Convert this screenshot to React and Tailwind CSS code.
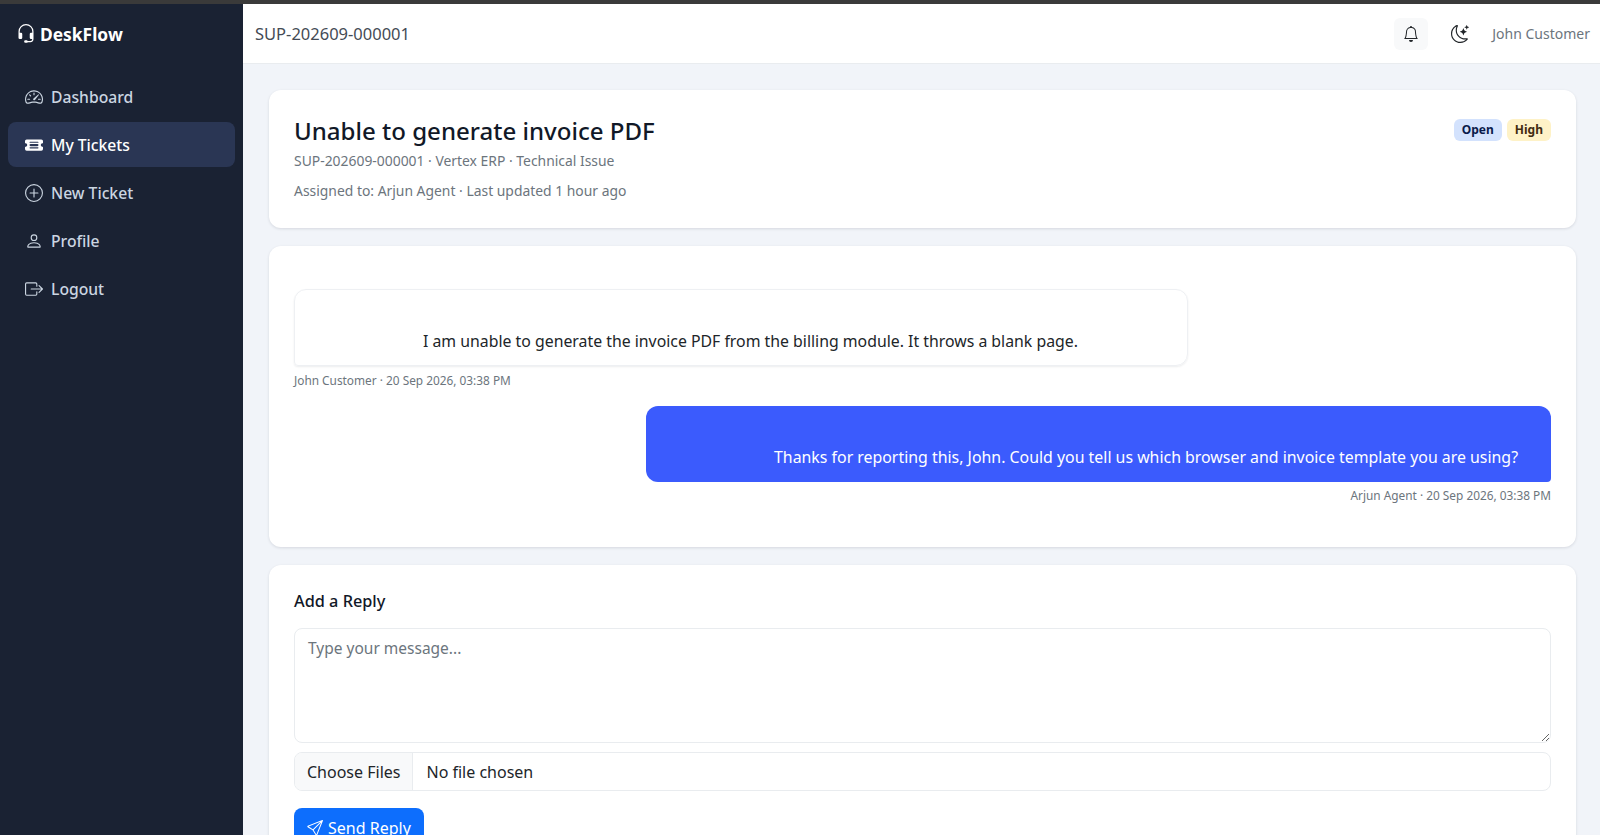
import React from "react";
import {
  BsHeadset,
  BsSpeedometer2,
  BsTicketDetailedFill,
  BsPlusCircle,
  BsPerson,
  BsBoxArrowRight,
  BsBell,
  BsMoonStars,
  BsSend,
} from "react-icons/bs";

const navItems = [
  { label: "Dashboard", icon: BsSpeedometer2 },
  { label: "My Tickets", icon: BsTicketDetailedFill, active: true },
  { label: "New Ticket", icon: BsPlusCircle },
  { label: "Profile", icon: BsPerson },
  { label: "Logout", icon: BsBoxArrowRight },
];

const Sidebar = () => (
  <aside className="w-[243px] shrink-0 bg-[#1a2233] text-[#cbd5e1]">
    <div className="flex h-[60px] items-center gap-[4px] pl-[16px] text-[17.4px] font-bold text-white">
      <BsHeadset className="text-[20px]" />
      DeskFlow
    </div>
    <nav className="mt-[10px] flex flex-col gap-[3px] px-2">
      {navItems.map((item) => (
        <a
          key={item.label}
          href="#"
          className={
            item.active
              ? "flex h-[45px] items-center gap-[8px] rounded-lg bg-[#2a3654] pl-[17px] text-[15.7px] font-medium text-white"
              : "flex h-[45px] items-center gap-[8px] rounded-lg pl-[17px] text-[15.7px] font-medium"
          }
        >
          <item.icon className="text-[18px]" />
          <span className="pt-[2px]">{item.label}</span>
        </a>
      ))}
    </nav>
  </aside>
);

const Header = () => (
  <header className="flex h-[60px] shrink-0 items-center justify-between border-b border-[#e9ecef] bg-white pl-[12px] pr-[10px]">
    <span className="pt-[2px] text-[16.5px] text-[#444b55]">SUP-202609-000001</span>
    <div className="flex items-center">
      <button className="flex h-[32px] w-[34px] items-center justify-center rounded-md bg-[#f8f9fa] text-[#212529]">
        <BsBell className="text-[16px]" />
      </button>
      <BsMoonStars className="ml-[23px] text-[18px] text-[#212529]" />
      <span className="ml-[23px] text-[14px] text-[#6c757d]">John Customer</span>
    </div>
  </header>
);

const Card = ({ className, children }) => (
  <section className={"rounded-xl bg-white px-[25px] shadow-[0_1px_3px_rgba(15,23,42,0.12)] " + className}>
    {children}
  </section>
);

const App = () => {
  return (
    <div className="h-[835px] w-[1600px] overflow-hidden bg-[#f1f4f9] font-['Noto_Sans',sans-serif] text-[#212529]">
      <div className="h-[4px] bg-[#3a3a3a]" />
      <div className="flex h-[831px]">
        <Sidebar />
        <div className="flex min-w-0 flex-1 flex-col">
          <Header />
          <main className="flex flex-col gap-[18px] pl-[26px] pr-[24px] pt-[26px]">
            <Card className="flex h-[138px] items-start justify-between pt-[25px]">
              <div>
                <h1 className="text-[24.05px] font-medium leading-[32px] text-[#111827]">Unable to generate invoice PDF</h1>
                <p className="mt-[2px] text-[13.9px] leading-[24px] text-[#6c757d]">
                  SUP-202609-000001 · Vertex ERP · Technical Issue
                </p>
                <p className="mt-[6px] text-[13.9px] leading-[24px] text-[#6c757d]">
                  Assigned to: Arjun Agent · Last updated 1 hour ago
                </p>
              </div>
              <div className="mt-[4px] flex gap-[5px] text-[12px] font-bold">
                <span className="rounded-md bg-[#d3e2fd] px-[8px] py-[2px] text-[#0a1a4a]">Open</span>
                <span className="rounded-md bg-[#fef2c7] px-[8px] py-[2px] text-[#422c10]">High</span>
              </div>
            </Card>

            <Card className="h-[301px] pt-[43px]">
              <div className="w-[894px] rounded-xl rounded-bl-sm border border-[#eef0f3] pb-[12px] pl-[128px] pt-[39px] text-[15.84px] leading-[24px] shadow-[0_1px_2px_rgba(15,23,42,0.08)]">
                I am unable to generate the invoice PDF from the billing module. It throws a blank page.
              </div>
              <p className="mt-[5px] text-[11.85px] leading-[18px] text-[#6c757d]">John Customer · 20 Sep 2026, 03:38 PM</p>
              <div className="ml-auto mt-[17px] w-[905px] rounded-xl rounded-br-sm bg-[#3b5bfd] pb-[13px] pl-[128px] pt-[39px] text-[15.88px] leading-[24px] text-white">
                Thanks for reporting this, John. Could you tell us which browser and invoice template you are using?
              </div>
              <p className="mt-[4px] text-right text-[11.85px] leading-[18px] text-[#6c757d]">Arjun Agent · 20 Sep 2026, 03:38 PM</p>
            </Card>

            <Card className="h-[300px] pt-[24px]">
              <h2 className="text-[16.3px] font-medium leading-[24px] text-[#111827]">Add a Reply</h2>
              <textarea
                placeholder="Type your message..."
                className="mt-[15px] block h-[115px] w-full rounded-lg border border-[#e9ecef] px-[13px] py-[7px] text-[15.5px] leading-[24px] placeholder:text-[#6c757d]"
              />
              <label className="mt-[9px] flex h-[39px] items-center overflow-hidden rounded-lg border border-[#e9ecef] text-[16px]">
                <input type="file" multiple className="hidden" />
                <span className="flex h-full items-center border-r border-[#e9ecef] bg-[#f8f9fa] px-[12px]">Choose Files</span>
                <span className="pl-[13px]">No file chosen</span>
              </label>
              <button className="mt-[17px] flex h-[39px] items-center gap-[5px] rounded-lg bg-[#0d6efd] px-[13px] text-[16px] text-white">
                <BsSend className="text-[16px]" />
                Send Reply
              </button>
            </Card>
          </main>
        </div>
      </div>
    </div>
  );
};

export default App;
